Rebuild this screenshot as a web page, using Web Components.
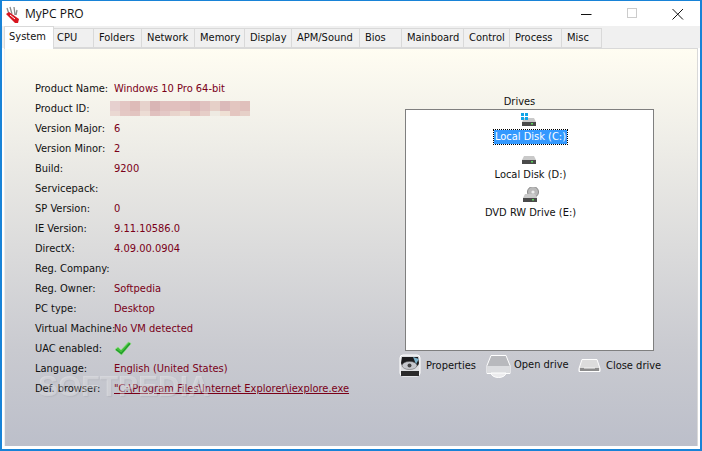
<!DOCTYPE html>
<html><head><meta charset="utf-8"><style>
html,body{margin:0;padding:0;background:#fff}
body{width:702px;height:451px;overflow:hidden;font:11px "DejaVu Sans Condensed","DejaVu Sans",sans-serif;font-stretch:condensed;color:#000}
</style></head><body>
<app-window>
  <title-bar slot="title">MyPC PRO</title-bar>
  <tab-strip slot="tabs" active="System" tabs="System:50,CPU:40,Folders:48,Network:53,Memory:50,Display:47,APM/Sound:68,Bios:42,Mainboard:62,Control:46,Process:52,Misc:40"></tab-strip>
  <system-panel slot="panel">
    <info-list slot="left">
      <info-row label="Product Name:">Windows 10 Pro 64-bit</info-row>
      <info-row label="Product ID:"><blur-bar></blur-bar></info-row>
      <info-row label="Version Major:">6</info-row>
      <info-row label="Version Minor:">2</info-row>
      <info-row label="Build:">9200</info-row>
      <info-row label="Servicepack:"></info-row>
      <info-row label="SP Version:">0</info-row>
      <info-row label="IE Version:">9.11.10586.0</info-row>
      <info-row label="DirectX:">4.09.00.0904</info-row>
      <info-row label="Reg. Company:"></info-row>
      <info-row label="Reg. Owner:">Softpedia</info-row>
      <info-row label="PC type:">Desktop</info-row>
      <info-row label="Virtual Machine:">No VM detected</info-row>
      <info-row label="UAC enabled:"><svg width="18" height="15" viewBox="0 0 18 15" style="display:block;margin-top:1px"><path d="M1 8.500 L4 6 L7 9 L14.500 1 L17 2.500 L7.500 14 Z" fill="#46c13e" stroke="#8fdc85" stroke-width=".8"/><path d="M2 8.500 L7.300 12.500 L16 2.500" fill="none" stroke="#1f9a2a" stroke-width="1.200"/></svg></info-row>
      <info-row label="Language:">English (United States)</info-row>
      <info-row label="Def. browser:"><u>"C:\Program Files\Internet Explorer\iexplore.exe</u></info-row>
    </info-list>
    <drives-box slot="right">
      <drive-item icon="win" selected>Local Disk (C:)</drive-item>
      <drive-item icon="hdd">Local Disk (D:)</drive-item>
      <drive-item icon="dvd">DVD RW Drive (E:)</drive-item>
    </drives-box>
    <span slot="mark" style="font:bold 30px 'Liberation Sans',sans-serif;color:rgba(255,255,255,.3);text-shadow:1px 1px 1px rgba(120,120,125,.15);filter:blur(.5px)">SOFTPEDIA</span>
  </system-panel>
</app-window>
<script>
const F='"DejaVu Sans Condensed","DejaVu Sans",sans-serif';
function def(name,html,init){customElements.define(name,class extends HTMLElement{connectedCallback(){if(this.shadowRoot)return;const s=this.attachShadow({mode:'open'});s.innerHTML=html;init&&init.call(this,s)}})}
def('app-window',`<style>:host{display:flex;flex-direction:column;box-sizing:border-box;width:702px;height:451px;border:2px solid #1883d7;border-top-width:1px;background:#fff}
.p{flex:1;min-height:0;display:flex;flex-direction:column;padding:0 2px 3px 2px}
</style><slot name="title"></slot><slot name="tabs"></slot><div class="p"><slot name="panel"></slot></div>`);
def('title-bar',`<style>:host{display:flex;align-items:center;height:25px;background:#fff;font:12px "Open Sans",sans-serif;color:#111;flex:none}
.ic{margin:0 5px 0 2px;display:block}.t{flex:1}
.b{width:46px;height:25px;display:flex;align-items:center;justify-content:center}
</style><svg class="ic" width="16" height="20" viewBox="0 0 16 20"><path d="M3 4l2 6M6 3l2 7M10 3l1 8M13 6l-1 5" stroke="#8a8a8a" stroke-width="1.300" fill="none"/><path d="M2 10 L5 8 L15 15 L14 19 L11 19 Z" fill="#d8141e"/><path d="M6 11l5 4" stroke="#fff" stroke-width="1"/></svg><span class="t"><slot></slot></span>
<span class="b" style="width:45px"><svg width="11" height="11"><path d="M0 6.500H10.500" stroke="#111"/></svg></span>
<span class="b"><svg width="11" height="11"><rect x=".5" y=".5" width="9" height="9" fill="none" stroke="#ccc"/></svg></span>
<span class="b" style="width:45px"><svg width="12" height="12"><path d="M.5 1 L11 11.500 M11 1 L.5 11.500" stroke="#111" fill="none"/></svg></span>`);
def('tab-strip',`<style>:host{display:flex;flex:none;height:22px;background:#f0f0f0;padding:0 0 0 2px;box-sizing:border-box;position:relative;z-index:1;align-items:flex-start;font:11px ${F}}
.t{box-sizing:border-box;height:20px;margin-top:2px;border:1px solid #d9d9d9;border-left:0;padding:2px 0 0 5px;color:#111;background:#f0f0f0;white-space:nowrap}
.a{height:23px;margin-top:0;background:#fff;border-left:1px solid #d9d9d9;border-bottom:0;padding:3px 0 0 4px}
</style><span id="h" style="display:contents"></span>`,function(s){
 const a=this.getAttribute('active');
 for(const x of this.getAttribute('tabs').split(',')){const[n,w]=x.split(':');const e=document.createElement('span');e.className='t'+(n===a?' a':'');e.textContent=n;e.style.width=w+'px';if(n==='CPU')e.style.paddingLeft='3px';s.getElementById('h').append(e)}
});
def('system-panel',`<style>:host{flex:1;min-height:0;display:flex;box-sizing:border-box;position:relative;border:1px solid #d9d9d9;border-left-color:#eee;border-bottom:0;background:linear-gradient(#fffdf2 0,#c9cad0 76%,#bcbfca 100%)}
.l{flex:none;width:400px;padding:29px 0 0 30px;box-sizing:border-box}
.r{flex:none}
.m{position:absolute;left:33px;top:320px;pointer-events:none}
</style><div class="l"><slot name="left"></slot></div><div class="r"><slot name="right"></slot></div><div class="m"><slot name="mark"></slot></div>`);
def('info-list',`<style>:host{display:block}</style><slot></slot>`);
def('info-row',`<style>:host{display:flex;height:20px;align-items:center;font:11px ${F};white-space:nowrap}
.k{width:79px;flex:none;color:#111}.v{color:#7a0018}
</style><span class="k"></span><span class="v"><slot></slot></span>`,function(s){s.querySelector('.k').textContent=this.getAttribute('label')});
def('blur-bar',`<style>:host{display:grid;grid-template-columns:repeat(14,10px);grid-template-rows:10px 5px;width:140px;height:15px;margin-left:-4px}</style>`,function(s){
 for(const c of ['#e6d0cf','#e3c6c3','#debbb8','#e6d2cc','#d9b5b5','#e0c0be','#e1c0be','#e1bfbd','#dcb8b8','#e0c2c0','#e6d0c8','#dbbaba','#e3c6c0','#e0c0bc','#ead8d2','#e4c8c4','#e2c4c0','#ecdcd4','#e0c0be','#e4c8c6','#e8d4cc','#ecdcd0','#e2c0bc','#e6cec8','#eeeae2','#efe0d4','#e4c6c0','#e6d0c8']){const i=document.createElement('i');i.style.background=c;s.append(i)}
});
def('drives-box',`<style>:host{display:flex;flex-direction:column;width:249px;font:11px ${F}}
.h{height:13px;margin-top:46px;margin-bottom:1px;text-align:center;line-height:13px;color:#111;padding-right:20px}
.b{height:242px;box-sizing:border-box;border:1px solid #7f7f7f;background:#fff;display:flex;flex-direction:column;align-items:center;padding-top:1px}
.f{display:flex;align-items:center;margin-left:-6px;margin-top:1px;height:27px;color:#111;white-space:nowrap}
.f>span{display:flex;align-items:center;flex:none}
.f svg{flex:none}
</style><div class="h">Drives</div><div class="b"><slot></slot></div>
<div class="f">
<span style="width:87px"><svg width="23" height="23" viewBox="0 0 23 23" style="margin-right:4px"><rect x="1" y="1" width="20" height="21" rx="3" fill="#dedfe2" stroke="#fff"/><path d="M3 3h16l1 6a9 5 0 0 1-18 0z" fill="#1c1c1e"/><ellipse cx="10.500" cy="11.500" rx="7.500" ry="4" fill="#c6c8cd" stroke="#555" stroke-width=".5"/><circle cx="10.500" cy="11.500" r="2" fill="#444"/><rect x="2" y="17" width="18" height="5" fill="#2a2a2a"/><path d="M14 3l6 2-3 5z" fill="#7fb4cc"/></svg>Properties</span>
<span style="width:92px"><svg width="25" height="24" viewBox="0 0 25 24" style="margin-right:3px"><path d="M5 1.500h15l4 10v8H1v-8z" fill="#b8b9bd" stroke="#fff"/><path d="M2 12h21v7H2z" fill="#dcdde0"/><path d="M5 19a7.500 4.500 0 0 0 15 0z" fill="#ececee" stroke="#fff"/></svg><span style="margin-top:-3px">Open drive</span></span>
<span><svg width="23" height="15" viewBox="0 0 23 15" style="margin-right:5px"><path d="M4 1.500h15l3 9v3H1v-3z" fill="#dcdcdc" stroke="#fff"/><path d="M2 10h19v3H2z" fill="#8c8c8c"/><path d="M6 10h11" stroke="#f5f5f5"/></svg>Close drive</span>
</div>`);
const disk='<path d="M9 7h10l2 4H7z" fill="#c9c9c9"/><rect x="7" y="11" width="14" height="4" fill="#4a4a4a"/><rect x="16" y="12" width="2" height="1.500" fill="#5bd15b"/>';
const extra={
 win:'<g fill="#11a5e8"><rect x="6" y="2" width="3" height="3"/><rect x="10" y="2" width="3" height="3"/><rect x="6" y="6" width="3" height="3"/><rect x="10" y="6" width="3" height="3"/></g>',
 hdd:'',
 dvd:'<circle cx="17" cy="5" r="5.500" fill="#b9b9b9" stroke="#8a8a8a"/><circle cx="17" cy="5" r="1.600" fill="#eee"/>'};
def('drive-item',`<style>:host{display:flex;flex-direction:column;align-items:center;height:38px;color:#111;font:11px ${F};white-space:nowrap}
svg{display:block;flex:none}
.t{height:14px;line-height:14px;padding:0 1px;margin:2px 0 0 2px;box-sizing:border-box}
:host([selected]) .t{background:#3399ff;color:#fff;outline:1px dotted #000;outline-offset:0}
</style><svg width="28" height="17" viewBox="0 0 28 17"></svg><span class="t"><slot></slot></span>`,function(s){
 const k=this.getAttribute('icon');
 s.querySelector('svg').innerHTML=(k==='dvd'?extra.dvd+disk:disk+extra[k]);
});
</script>
</body></html>
